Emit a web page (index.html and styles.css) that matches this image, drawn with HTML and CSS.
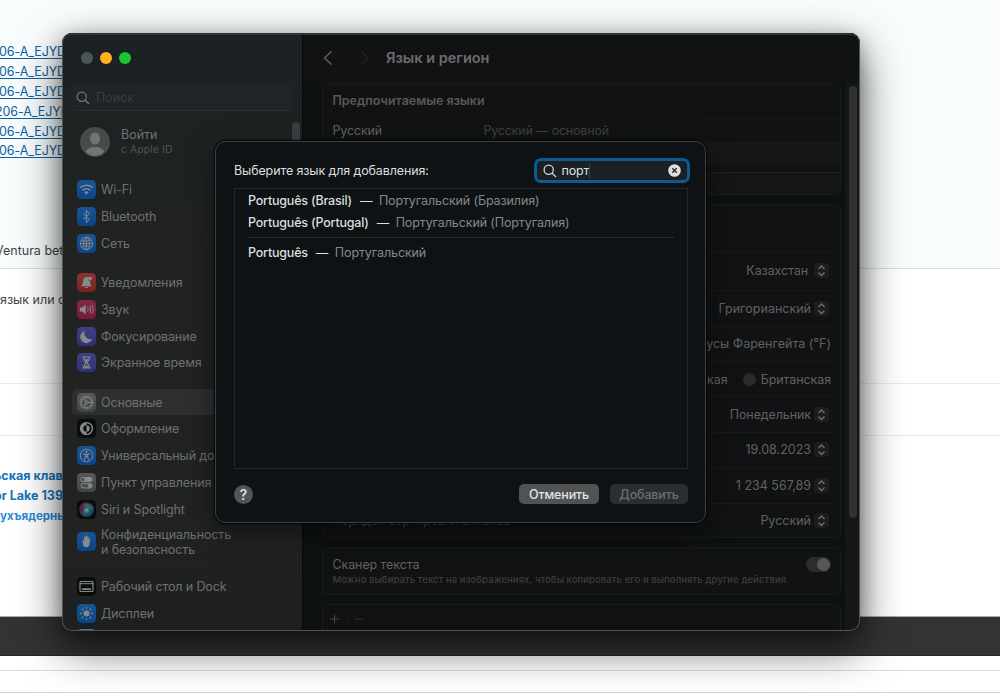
FILE: index.html
```html
<!DOCTYPE html>
<html lang="ru">
<head>
  <meta charset="UTF-8" />
  <meta name="viewport" content="width=device-width, initial-scale=1.0" />
  <title>Язык и регион</title>
  <link rel="stylesheet" href="styles.css">
</head>
<body>
  <div class="page">
    <div class="page-top">
      <div class="links">
        <a>06-A_EJYD</a>
        <a>06-A_EJYD</a>
        <a>06-A_EJYD</a>
        <a class="shift">206-A_EJYD</a>
        <a>06-A_EJYD</a>
        <a>06-A_EJYD</a>
      </div>
      <p class="page-text ventura">Ventura beta</p>
    </div>
    <div class="page-question"><p class="page-text">язык или с</p></div>
    <div class="page-gap"></div>
    <div class="page-related">
      <b class="r1">ьская клавиа</b>
      <b class="r2">or Lake 1390</b>
      <b class="r3">ухъядерный</b>
    </div>
    <div class="page-bar"></div>
    <div class="page-foot"></div>
    <div class="page-end"></div>
  </div>

  <div class="window">
    <aside class="sidebar">
      <div class="lights"><i></i><i class="yellow"></i><i class="green"></i></div>
      <div class="side-search">
        <svg width="14" height="14" viewBox="0 0 14 14"><circle cx="5.7" cy="5.7" r="4.6"/><path d="M9 9l4 4"/></svg>
        <span>Поиск</span>
      </div>
      <div class="account">
        <svg width="30" height="30" viewBox="0 0 30 30"><circle cx="15" cy="15" r="15" fill="#494b4a"/><ellipse cx="15" cy="11.5" rx="5" ry="6" fill="#737474"/><path d="M5.700 24.800C7.500 21.300 11 20 15 20s7.500 1.300 9.300 4.800C22 27.600 18.500 29 15 29s-7-1.400-9.300-4.200z" fill="#737474"/></svg>
        <div><span class="login">Войти</span><span class="apple">с Apple ID</span></div>
      </div>

      <div class="group">
        <div class="item"><svg class="ic blue" viewBox="0 0 19 19"><g class="ln" stroke-width="1.600"><path d="M3.300 7.700a9 9 0 0 1 12.400 0M5.700 10.300a5.500 5.500 0 0 1 7.600 0"/></g><path class="fl" d="M7.300 12.300a3.200 3.200 0 0 1 4.400 0L9.500 14.500z"/></svg><span>Wi-Fi</span></div>
        <div class="item"><svg class="ic blue" viewBox="0 0 19 19"><path class="ln" d="M6 6.500l6.500 6-3.200 3V3.500l3.200 3L6 12.500"/></svg><span>Bluetooth</span></div>
        <div class="item"><svg class="ic blue" viewBox="0 0 19 19"><g class="ln" stroke-width=".9"><circle cx="9.500" cy="9.500" r="6.300"/><ellipse cx="9.500" cy="9.500" rx="3" ry="6.300"/><path d="M3.200 9.500h12.600M9.500 3.200v12.600M4.500 6c3 1.700 7 1.700 10 0M4.500 13c3-1.700 7-1.700 10 0"/></g></svg><span>Сеть</span></div>
      </div>
      <div class="group">
        <div class="item"><svg class="ic red" viewBox="0 0 19 19"><path class="fl" d="M4 13.200c1.600-1.500 1.700-2.600 1.900-4.700C6.200 5.700 7.200 4 9.500 4c.7 0 1.100.1 1.500.4-.5 1.700.5 3.400 2 3.700.1 2.300.3 3.600 2 5.100zM7.800 14h3.400c-.3 1.600-3.100 1.600-3.400 0z"/><circle class="fl" cx="13" cy="5.600" r="2"/></svg><span>Уведомления</span></div>
        <div class="item"><svg class="ic pink" viewBox="0 0 19 19"><path class="fl" d="M2.700 7.600h2.600l3.400-3v9.800l-3.400-3H2.700z"/><path class="ln" stroke-width="1" d="M10.500 7.500c.9 1.200.9 2.800 0 4M12.500 6.200c1.600 2 1.600 4.600 0 6.600M14.500 5c2.200 2.800 2.200 6.200 0 9"/></svg><span>Звук</span></div>
        <div class="item"><svg class="ic violet" viewBox="0 0 19 19"><path class="fl" d="M7.700 3.800a6.200 6.200 0 1 0 7.600 8.100A6.200 6.200 0 0 1 7.700 3.800z"/></svg><span>Фокусирование</span></div>
        <div class="item"><svg class="ic violet" viewBox="0 0 19 19"><path class="ln" stroke-width="1.200" d="M5.300 4h8.400M5.300 15h8.400M6.500 4c0 3.200 2 4 2.400 5.500C8.500 11 6.500 12 6.500 15M12.500 4c0 3.200-2 4-2.400 5.500.4 1.500 2.400 2.500 2.400 5.500"/><path class="fl" d="M7.300 6.300h4.400L9.500 9zM7 14.800l2.500-2.800 2.500 2.800z"/></svg><span>Экранное время</span></div>
      </div>
      <div class="group">
        <div class="item on"><svg class="ic grey" viewBox="0 0 19 19"><g class="ln" stroke-width="1"><circle cx="9.500" cy="9.500" r="5.300"/><circle cx="9.500" cy="9.500" r="6.500" stroke-width="1.200" stroke-dasharray="1.100 .94"/><circle cx="9.500" cy="9.500" r="1.400"/><path d="M10.900 9.500h3.900M8.800 8.300L6.800 5M8.800 10.700L6.800 14"/></g></svg><span>Основные</span></div>
        <div class="item"><svg class="ic black" viewBox="0 0 19 19"><circle class="ln" cx="9.500" cy="9.500" r="5.900" stroke-width="1.400"/><path class="fl" d="M9.500 3.600a5.900 5.900 0 0 0 0 11.800v-2.700a3.200 3.200 0 0 1 0-6.400zM9.500 6.300a3.200 3.200 0 0 1 0 6.400z"/></svg><span>Оформление</span></div>
        <div class="item"><svg class="ic blue" viewBox="0 0 19 19"><circle class="ln" cx="9.500" cy="9.500" r="6.300" stroke-width="1"/><circle class="fl" cx="9.500" cy="5.700" r="1.100"/><path class="ln" stroke-width="1.100" d="M5.800 7.700l2.800.7v2.300L7.300 14M13.200 7.700l-2.800.7v2.300l1.300 3.300M8.600 8.400h1.800M8.800 10.500h1.400"/></svg><span>Универсальный доступ</span></div>
        <div class="item"><svg class="ic grey" viewBox="0 0 19 19"><rect class="fl" x="3.500" y="4" width="12" height="5" rx="2.500"/><circle cx="6" cy="6.500" r="1.600" fill="#4b4d4d"/><rect class="ln" x="4" y="10.700" width="11" height="4.200" rx="2.100" stroke-width="1"/><circle class="fl" cx="12.900" cy="12.800" r="2"/></svg><span>Пункт управления</span></div>
        <div class="item"><svg class="ic black" viewBox="0 0 19 19"><defs><linearGradient id="siri" x1="0" y1="0" x2="1" y2="1"><stop offset="0" stop-color="#85143a"/><stop offset=".35" stop-color="#4a2448"/><stop offset=".6" stop-color="#1d5a68"/><stop offset="1" stop-color="#143c5c"/></linearGradient><radialGradient id="glow"><stop offset="0" stop-color="#8f9f9f"/><stop offset="1" stop-color="#578d88" stop-opacity="0"/></radialGradient></defs><circle cx="9.500" cy="9.500" r="7.300" fill="url(#siri)"/><path d="M8 3.200c4 .1 7 3 6.500 6-2-2-5-3-9-1.800z" fill="#277f65" opacity=".7"/><circle cx="9.500" cy="10" r="4" fill="url(#glow)"/></svg><span>Siri и Spotlight</span></div>
        <div class="item two"><svg class="ic blue" viewBox="0 0 19 19"><path class="fl" d="M5.300 8.300c.3-.6 1-.5 1.200.1l.5 1.100V5.200c0-.9 1.300-.9 1.400 0l.2 2.900V3.900c0-.9 1.400-.9 1.400 0v4.200l.3-3.400c.1-.8 1.300-.7 1.300.1l-.1 4 .6-2.200c.2-.7 1.300-.5 1.200.3l-.6 4.400c-.3 2.600-1.400 4-3.400 4-1.700 0-2.600-.8-3.200-2.200z"/></svg><span>Конфиденциальность<br>и безопасность</span></div>
      </div>
      <div class="group">
        <div class="item"><svg class="ic black" viewBox="0 0 19 19"><rect class="ln" x="3" y="4.500" width="13" height="10" rx="1" stroke-width="1.200"/><path class="ln" stroke-width="1" d="M3 6.700h13"/><path class="fl" d="M5 11.300h9v1.600H5z"/></svg><span>Рабочий стол и Dock</span></div>
        <div class="item"><svg class="ic blue" viewBox="0 0 19 19"><circle class="fl" cx="9.500" cy="9.500" r="3"/><path class="ln" stroke-width="1.300" stroke-linecap="round" d="M9.500 3.500v.7M9.500 14.800v.7M3.500 9.500h.7M14.800 9.500h.7M5.300 5.300l.5.500M13.200 13.200l.5.500M13.700 5.300l-.5.500M5.800 13.200l-.5.500"/></svg><span>Дисплеи</span></div>
        <div class="item last"><svg class="ic teal" viewBox="0 0 19 19"></svg></div>
      </div>
      <div class="side-thumb"></div>
    </aside>

    <main class="content">
      <header class="titlebar">
        <svg class="back" width="10" height="16" viewBox="0 0 10 16"><path d="M8.500 1.500L1.500 8l7 6.500"/></svg>
        <svg class="fwd" width="10" height="16" viewBox="0 0 10 16"><path d="M1.500 1.500L8.500 8l-7 6.500"/></svg>
        <h1>Язык и регион</h1>
      </header>
      <div class="scroll">
        <div class="cards">
          <section class="card langs">
            <h2>Предпочитаемые языки</h2>
            <div class="lang"><span class="l1">Русский</span><span class="l2">Русский — основной</span></div>
            <div class="lang alt"></div>
            <div class="lang-tools"></div>
          </section>
          <section class="card settings">
            <div class="row first"></div>
            <div class="row tall"><span>Казахстан</span><i class="step"><svg viewBox="0 0 15 15"><path d="M4.500 6l3-3 3 3M4.500 9.500l3 3 3-3"/></svg></i></div>
            <div class="row"><span>Григорианский</span><i class="step"><svg viewBox="0 0 15 15"><path d="M4.500 6l3-3 3 3M4.500 9.500l3 3 3-3"/></svg></i></div>
            <div class="row"><span>Градусы Фаренгейта (°F)</span></div>
            <div class="row"><span>Американская</span><i class="radio"></i><span class="brit">Британская</span></div>
            <div class="row"><span class="mon">Понедельник</span><i class="step"><svg viewBox="0 0 15 15"><path d="M4.500 6l3-3 3 3M4.500 9.500l3 3 3-3"/></svg></i></div>
            <div class="row"><span>19.08.2023</span><i class="step"><svg viewBox="0 0 15 15"><path d="M4.500 6l3-3 3 3M4.500 9.500l3 3 3-3"/></svg></i></div>
            <div class="row"><span>1 234 567,89</span><i class="step"><svg viewBox="0 0 15 15"><path d="M4.500 6l3-3 3 3M4.500 9.500l3 3 3-3"/></svg></i></div>
            <div class="row"><span class="sort">Порядок сортировки списков</span><span>Русский</span><i class="step"><svg viewBox="0 0 15 15"><path d="M4.500 6l3-3 3 3M4.500 9.500l3 3 3-3"/></svg></i></div>
          </section>
          <section class="card live">
            <div><span class="live-title">Сканер текста</span><span class="live-sub">Можно выбирать текст на изображениях, чтобы копировать его и выполнять другие действия.</span></div>
            <i class="toggle"></i>
          </section>
          <section class="card apps">
            <svg width="40" height="12" viewBox="0 0 40 12"><path d="M1 6h9M5.500 1.500v9" stroke="#48494a"/><path d="M18 0v12" stroke="#17191a"/><path d="M25.500 6h9" stroke="#2e3031"/></svg>
          </section>
        </div>
        <div class="track"><div class="thumb"></div></div>
      </div>
    </main>

    <div class="dialog">
      <div class="dialog-head">
        <span class="ask">Выберите язык для добавления:</span>
        <div class="field">
          <svg width="14" height="14" viewBox="0 0 14 14"><circle cx="5.700" cy="5.700" r="4.600"/><path d="M9 9l4 4"/></svg>
          <span class="typed">порт</span><i class="caret"></i>
          <svg class="clear" width="13" height="13" viewBox="0 0 13 13"><circle cx="6.500" cy="6.500" r="6.300"/><path d="M4.300 4.300l4.400 4.400M8.700 4.300L4.300 8.700"/></svg>
        </div>
      </div>
      <div class="list">
        <div class="opt"><b>Português (Brasil)</b><em>—</em><span>Португальский (Бразилия)</span></div>
        <div class="opt"><b>Português (Portugal)</b><em>—</em><span>Португальский (Португалия)</span></div>
        <hr>
        <div class="opt"><b>Português</b><em>—</em><span>Португальский</span></div>
      </div>
      <div class="dialog-foot">
        <button class="help">?</button>
        <button class="btn cancel">Отменить</button>
        <button class="btn add">Добавить</button>
      </div>
    </div>
  </div>
</body>
</html>
```

FILE: styles.css
```css
* { box-sizing: border-box; }
body { margin: 0; height: 697px; overflow: hidden; position: relative; background: #fff; font-family: Inter, "Liberation Sans", sans-serif; font-size: 12.500px; }
span, b, a, h1, h2 { white-space: nowrap; }
i, em { font-style: normal; display: block; flex: none; }
p, h1, h2, hr { margin: 0; }

/* page behind the window */
.page-top { height: 269px; background: #f8fcfd; border-bottom: 1px solid #d3e1e8; padding-top: 42px; }
.links { display: flex; flex-direction: column; height: 201px; }
.links a { height: 19.900px; line-height: 20px; font-size: 12.500px; color: #0f62a0; text-decoration: underline; text-underline-offset: 2px; margin-left: -1px; letter-spacing: -.1px; }
.links .shift { margin-left: -5px; }
.page-text { font-size: 12.500px; line-height: 16px; color: #444; white-space: nowrap; }
.ventura { margin-left: -5px; }
.page-question { height: 115px; padding-top: 23px; border-bottom: 1px solid #ececec; }
.page-gap { height: 52px; border-bottom: 1px solid #ececec; }
.page-related { height: 181px; padding-top: 29.500px; border-bottom: 1px solid #aaa; display: flex; flex-direction: column; color: #1474b8; line-height: 20px; }
.page-related b { margin-left: -6px; }
.page-related .r3 { margin-left: 0; font-size: 11.500px; color: #2a8ad4; }
.page-bar { height: 39px; background: #333; border-bottom: 1px solid #262626; }
.page-foot { height: 15px; border-bottom: 1px solid #dcdcdc; }
.page-end { height: 22px; border-bottom: 1px solid #d4d4d4; }

/* settings window */
.window { position: absolute; left: 62px; top: 33px; width: 798px; height: 598px; border-radius: 10px; display: flex; background: #0e1112; box-shadow: 0 16px 44px rgba(0,0,0,.65), 0 4px 18px rgba(0,0,0,.25); }
.window::after { content: ""; position: absolute; inset: 0; border-radius: 10px; border: 1px solid #505354; border-top: 2px solid #303435; pointer-events: none; }

.sidebar { position: relative; width: 241px; height: 598px; padding-top: 19px; overflow: hidden; flex: none; border-radius: 10px 0 0 10px; border-right: 1px solid #060707; background: linear-gradient(#1b2124, #1e2222 20%, #212322 35%, #212322 85%, #1c1e20); }
.lights { display: flex; gap: 7px; margin-left: 19px; }
.lights i { width: 12px; height: 12px; border-radius: 50%; background: #4c555b; }
.lights .yellow { background: #ffb11f; }
.lights .green { background: #1cc535; }
.side-search { margin: 20px 0 0 9px; width: 223px; height: 27px; border-radius: 6px; background: #1e2427; border-bottom: 1px solid #2b3133; display: flex; align-items: center; gap: 6px; padding: 1px 0 0 5px; color: #363c3e; }
.side-search svg { fill: none; stroke: #74787a; stroke-width: 1.200; }
.account { display: flex; align-items: center; gap: 11px; margin: 15px 0 19.300px 18px; height: 31px; }
.account span { display: block; }
.login { line-height: 16px; color: #707374; }
.apple { font-size: 10.500px; line-height: 14px; color: #4e5253; letter-spacing: .05px; }
.group { margin-bottom: 12.400px; }
.item { height: 26.800px; margin-left: 10px; padding-left: 5px; display: flex; align-items: center; gap: 5px; color: #6f7170; letter-spacing: -.13px; }
.item.two { height: 37.800px; line-height: 15px; }
.item.on { background: #2d2f30; border-radius: 5px; margin-right: 9px; }
.item.last { align-items: flex-start; padding-top: 3px; }
.ic { width: 19px; height: 19px; border-radius: 4.500px; flex: none; }
.fl { fill: #858a8b; }
.ln { fill: none; stroke: #858a8b; }
.blue { background: linear-gradient(#1a5490, #0b4488); }
.red { background: linear-gradient(#87352d, #762320); }
.pink { background: linear-gradient(#822944, #7a1a37); }
.violet { background: linear-gradient(#414083, #303074); }
.grey { background: linear-gradient(#555758, #434546); }
.black { background: #0b0c0c; }
.teal { background: #3c8098; }
.side-thumb { position: absolute; left: 230px; top: 89px; width: 8px; height: 120px; border-radius: 4px; background: #3a3e40; }

/* right pane */
.content { flex: 1; height: 598px; overflow: hidden; border-radius: 0 10px 10px 0; display: flex; flex-direction: column; background: #0e1112; }
.titlebar { height: 50px; display: flex; align-items: center; padding-left: 20px; background: #111213; flex: none; }
.titlebar svg { fill: none; stroke: #606263; stroke-width: 1.400; }
.titlebar .fwd { margin-left: 27px; stroke: #222425; }
.titlebar h1 { font-size: 14.500px; line-height: 18px; font-weight: 600; color: #6c6d6e; margin: 0 0 1px 16px; }
.scroll { flex: 1; display: flex; }
.cards { width: 519px; margin-left: 19px; display: flex; flex-direction: column; gap: 9px; flex: none; }
.card { background: #111213; border: 1px solid #191b1c; border-radius: 5px; color: #606263; flex: none; }
.langs { height: 112px; }
.langs h2 { height: 34px; padding-left: 9.500px; line-height: 34px; font-size: 12.500px; font-weight: 600; color: #58595a; }
.lang { height: 24px; border-top: 1px solid #171919; padding-left: 9.500px; display: flex; align-items: center; letter-spacing: -.15px; }
.lang .l1 { width: 151px; }
.lang .l2 { color: #3f4142; letter-spacing: -.2px; }
.lang.alt { background: #161718; border: 0; height: 23px; }
.lang-tools { height: 22px; margin-top: 7px; border-top: 1px solid #1e2021; background: #151617; border-radius: 0 0 5px 5px; }
.settings { height: 334px; padding: 0 9px; }
.row { height: 35.400px; border-top: 1px solid #181a1b; display: flex; align-items: center; justify-content: flex-end; }
.row.first { height: 47px; border: 0; }
.row.tall { height: 38.200px; padding-bottom: 2px; }
.row.tall span { margin-right: 3px; letter-spacing: -.1px; }
.row .brit, .row .mon { letter-spacing: -.1px; }
.step { width: 15px; height: 15px; margin: 0 2px 0 3px; border-radius: 4px; background: #1b1d1e; }
.step svg { display: block; fill: none; stroke: #6c6e6f; stroke-width: 1.300; }
.radio { width: 13px; height: 13px; border-radius: 50%; background: #292a2b; margin: 0 5px 0 15px; }
.sort { margin-right: auto; color: #4d4f50; letter-spacing: -.14px; }
.live { height: 48px; display: flex; padding: 9px 9px 0 9.500px; justify-content: space-between; }
.live span { display: block; }
.live-title { line-height: 16px; letter-spacing: -.1px; }
.live-sub { font-size: 9.500px; line-height: 13px; color: #3b3d3e; font-weight: 500; letter-spacing: .085px; }
.toggle { width: 25px; height: 15px; border-radius: 8px; background: #2b2c2d; display: flex; justify-content: flex-end; padding: 1px; }
.toggle::after { content: ""; width: 13px; height: 13px; border-radius: 50%; background: #555657; }
.apps { height: 60px; background: #101211; padding: 8px 6px; }
.track { margin-left: 4px; width: 15px; background: #151617; }
.thumb { width: 8px; height: 432px; margin: 3px 0 0 4px; border-radius: 4px; background: #303132; }

/* add language sheet */
.dialog { position: absolute; left: 153px; top: 108px; width: 491px; height: 382px; border: 1px solid #3e4243; border-radius: 10px; background: #0e1214; box-shadow: 0 10px 28px rgba(0,0,0,.5), 0 0 1px 1px #050606; padding: 16px 17px 0 18px; z-index: 2; }
.dialog-head { display: flex; justify-content: space-between; height: 30px; }
.ask { color: #dcdedf; line-height: 26px; letter-spacing: -.12px; }
.field { width: 156px; height: 25px; margin-right: -1.500px; border: 3px solid #0c5c91; border-radius: 7px; background: #1c2022; display: flex; align-items: center; padding: 0 6px; color: #dfe0e0; }
.field svg { fill: none; stroke: #d5d7d8; stroke-width: 1.300; flex: none; }
.typed { margin-left: 5px; letter-spacing: -.2px; }
.caret { width: 1px; height: 15px; background: #1d4475; }
.field .clear { margin-left: auto; fill: #dedfdf; stroke: none; }
.field .clear path { stroke: #1c2022; stroke-width: 1.300; }
.list { height: 281px; border: 1px solid #252727; padding: 0 13px; }
.opt { height: 22px; display: flex; align-items: center; color: #dcdedf; letter-spacing: -.12px; }
.opt b { font-weight: 500; letter-spacing: -.2px; }
.opt em { margin: 0 8px; width: 11px; }
.opt span { color: #858889; }
.list hr { height: 1px; border: 0; background: #282b2c; margin: 4px 0 3.500px; }
.dialog-foot { display: flex; padding-top: 16px; }
button { font-family: inherit; border: 0; padding: 0; }
.help { width: 19px; height: 19px; border-radius: 50%; background: #535456; color: #e6e7e7; font-size: 14px; font-weight: 500; line-height: 19px; }
.btn { height: 20px; margin-top: -1px; border-radius: 5px; font-size: 12.500px; font-weight: 500; line-height: 19px; letter-spacing: -.15px; }
.cancel { width: 80px; margin-left: auto; background: #505254; color: #e2e3e3; }
.add { width: 78px; margin-left: 11px; background: #2a2e30; color: #6a6d6e; }
```
